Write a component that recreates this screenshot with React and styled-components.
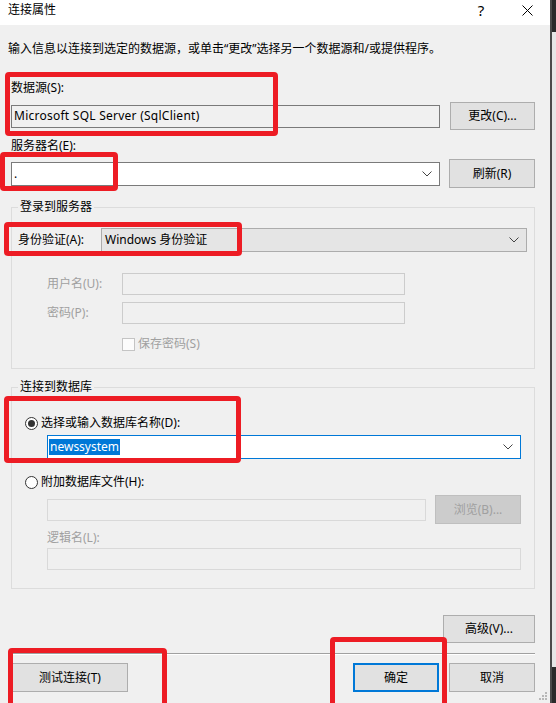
import React from "react";
import styled, { createGlobalStyle } from "styled-components";

const GlobalStyle = createGlobalStyle`
  html, body {
    margin: 0;
    padding: 0;
  }
  body {
    background: #f0f0f0;
    font-family: "Noto Sans", "Noto Sans CJK SC", sans-serif;
    font-size: 12px;
    line-height: 16px;
    color: #000;
  }
`;

const Screen = styled.div`
  position: relative;
  width: 556px;
  height: 703px;
  display: flex;
  overflow: hidden;
`;

const Dialog = styled.div`
  width: 550px;
  display: flex;
  flex-direction: column;
  background: #f0f0f0;
`;

const TitleBar = styled.div`
  height: 25px;
  flex: none;
  background: #fff;
  display: flex;
  align-items: flex-start;
  padding: 2px 13px 0 8px;
  box-sizing: border-box;
`;

const TitleControls = styled.div`
  margin-left: auto;
  display: flex;
  align-items: center;
  gap: 26px;
  height: 16px;
`;

const HelpMark = styled.span`
  width: 20px;
  text-align: center;
  font-size: 15px;
`;

const CloseMark = styled.span`
  width: 20px;
  display: flex;
  justify-content: center;
`;

const Body = styled.div`
  display: flex;
  flex-direction: column;
  padding: 0 15px 0 11px;
`;

const Description = styled.div`
  margin: 16px 0 0 -3px;
`;

const Label = styled.div`
  margin-top: ${p => p.mt || 0}px;
  margin-left: ${p => p.ml || 0}px;
  color: ${p => (p.disabled ? "#a0a0a0" : "#000")};
`;

const Row = styled.div`
  display: flex;
  align-items: center;
  gap: ${p => p.gap || 0}px;
  margin-top: ${p => p.mt || 0}px;
  margin-left: ${p => p.ml || 0}px;
  justify-content: ${p => p.justify || "flex-start"};
`;

const Field = styled.div`
  position: relative;
  box-sizing: border-box;
  display: flex;
  align-items: center;
  height: ${p => p.h || 23}px;
  width: ${p => (p.w ? `${p.w}px` : "auto")};
  flex: ${p => (p.w ? "none" : "1")};
  margin-left: ${p => p.ml || 0}px;
  padding-left: ${p => p.pl || 2}px;
  background: ${p => p.bg || "#fff"};
  border: 1px solid ${p => p.bc || "#7a7a7a"};
  letter-spacing: ${p => p.ls || 0}px;
  white-space: nowrap;
`;

const Chevron = styled.svg`
  position: absolute;
  right: 7px;
  top: 50%;
  margin-top: -3px;
`;

const Selected = styled.span`
  background: #0078d7;
  color: #fff;
  padding: 0 1px;
`;

const Button = styled.button`
  box-sizing: border-box;
  flex: none;
  width: ${p => p.w || 86}px;
  height: ${p => p.h || 29}px;
  margin: 0;
  margin-left: ${p => p.ml || 0}px;
  padding: 0;
  font: inherit;
  color: ${p => (p.disabled ? "#a0a0a0" : "#000")};
  background: ${p => (p.disabled ? "#cccccc" : "#e1e1e1")};
  border: ${p => (p.primary ? "2px solid #0078d7" : `1px solid ${p.disabled ? "#bfbfbf" : "#adadad"}`)};
`;

const Group = styled.fieldset`
  margin: ${p => p.mt}px 0 0 0;
  padding: 0 ${p => p.pr}px ${p => p.pb}px 6px;
  border: 1px solid #dcdcdc;
  min-width: 0;
  display: flex;
  flex-direction: column;
`;

const Legend = styled.legend`
  padding: 0 2px;
  line-height: 16px;
`;

const AuthLabel = styled.div`
  width: 83px;
  flex: none;
`;

const CredLabel = styled.div`
  width: 75px;
  margin-left: 29px;
  flex: none;
  color: #a0a0a0;
`;

const CheckBox = styled.div`
  width: 13px;
  height: 13px;
  box-sizing: border-box;
  border: 1px solid #c4c4c4;
  background: #fcfcfc;
  flex: none;
`;

const Radio = styled.div`
  position: relative;
  width: 13px;
  height: 13px;
  box-sizing: border-box;
  border-radius: 50%;
  border: 1px solid #333;
  background: #fff;
  margin-left: 7px;
  flex: none;
  &::after {
    content: "";
    display: ${p => (p.checked ? "block" : "none")};
    position: absolute;
    left: 2px;
    top: 2px;
    width: 7px;
    height: 7px;
    border-radius: 50%;
    background: #333;
  }
`;

const Separator = styled.div`
  margin-top: 10px;
  height: 0;
  border-top: 1px solid #a0a0a0;
  border-bottom: 1px solid #fff;
`;

const Strip = styled.div`
  width: 6px;
  display: flex;
  flex-direction: column;
  border-left: 2px solid #4a4a4a;
  box-sizing: border-box;
  flex: none;
`;

const StripPart = styled.div`
  height: ${p => (p.h ? `${p.h}px` : "auto")};
  flex: ${p => (p.h ? "none" : "1")};
  background: ${p => p.bg};
`;

const Mark = styled.div`
  position: absolute;
  left: ${p => p.x}px;
  top: ${p => p.y}px;
  width: ${p => p.w}px;
  height: ${p => p.h}px;
  box-sizing: border-box;
  border: 5px solid #ed1c24;
  border-radius: 4px;
  pointer-events: none;
`;

const Grip = styled.svg`
  position: absolute;
  left: 539px;
  top: 692px;
`;

const Down = () => (
  <Chevron width="10" height="6" viewBox="0 0 10 6">
    <polyline points="0.5,0.5 5,5 9.5,0.5" fill="none" stroke="#444" strokeWidth="1" />
  </Chevron>
);

const App = () => (
  <Screen>
    <GlobalStyle />
    <Dialog>
      <TitleBar>
        连接属性
        <TitleControls>
          <HelpMark>?</HelpMark>
          <CloseMark>
            <svg width="11" height="11" viewBox="0 0 11 11">
              <path d="M0.5 0.5 L10.5 10.5 M10.5 0.5 L0.5 10.5" stroke="#000" strokeWidth="1" />
            </svg>
          </CloseMark>
        </TitleControls>
      </TitleBar>
      <Body>
        <Description>
          输入信息以连接到选定的数据源，或单击“更改”选择另一个数据源和/或提供程序。
        </Description>

        <Label mt={23}>数据源(S):</Label>
        <Row mt={6} gap={10}>
          <Field h={23} pl={2} bg="#f0f0f0" ls={0.25}>Microsoft SQL Server (SqlClient)</Field>
          <Button w={85} h={28}>更改(C)...</Button>
        </Row>

        <Label mt={8}>服务器名(E):</Label>
        <Row mt={5} gap={9}>
          <Field h={24} pl={2}>
            .
            <Down />
          </Field>
          <Button>刷新(R)</Button>
        </Row>

        <Group mt={11} pr={7} pb={16}>
          <Legend>登录到服务器</Legend>
          <Row mt={13}>
            <AuthLabel>身份验证(A):</AuthLabel>
            <Field h={24} pl={3} bg="#e5e5e5" bc="#acacac">
              Windows 身份验证
              <Down />
            </Field>
          </Row>
          <Row mt={21}>
            <CredLabel>用户名(U):</CredLabel>
            <Field w={283} h={22} bg="#f0f0f0" bc="#cccccc" />
          </Row>
          <Row mt={7}>
            <CredLabel>密码(P):</CredLabel>
            <Field w={283} h={22} bg="#f0f0f0" bc="#cccccc" />
          </Row>
          <Row mt={12} ml={104} gap={3}>
            <CheckBox />
            <Label disabled>保存密码(S)</Label>
          </Row>
        </Group>

        <Group mt={10} pr={13} pb={18}>
          <Legend>连接到数据库</Legend>
          <Row mt={20} gap={3}>
            <Radio checked />
            <span>选择或输入数据库名称(D):</span>
          </Row>
          <Row mt={4}>
            <Field ml={29} h={24} pl={1} bc="#0078d7">
              <Selected>newssystem</Selected>
              <Down />
            </Field>
          </Row>
          <Row mt={15} gap={3}>
            <Radio />
            <span>附加数据库文件(H):</span>
          </Row>
          <Row mt={5} gap={9}>
            <Field ml={29} h={22} bg="#f0f0f0" bc="#d9d9d9" />
            <Button disabled>浏览(B)...</Button>
          </Row>
          <Label mt={6} ml={29} disabled>逻辑名(L):</Label>
          <Row mt={2}>
            <Field ml={29} h={22} bg="#f0f0f0" bc="#d9d9d9" />
          </Row>
        </Group>

        <Row mt={26} justify="flex-end">
          <Button w={92} h={28}>高级(V)...</Button>
        </Row>
        <Separator />
        <Row mt={8}>
          <Button w={116} ml={1}>测试连接(T)</Button>
          <Button primary ml={225}>确定</Button>
          <Button ml={10}>取消</Button>
        </Row>
      </Body>
    </Dialog>
    <Strip>
      <StripPart h={32} bg="#2b2b2b" />
      <StripPart bg="#e6e6e6" />
      <StripPart h={36} bg="#2b2b2b" />
    </Strip>

    <Grip width="9" height="9" viewBox="0 0 9 9">
      <rect x="6" y="0" width="2" height="2" fill="#b8b8b8" />
      <rect x="3" y="3" width="2" height="2" fill="#b8b8b8" />
      <rect x="6" y="3" width="2" height="2" fill="#b8b8b8" />
      <rect x="0" y="6" width="2" height="2" fill="#b8b8b8" />
      <rect x="3" y="6" width="2" height="2" fill="#b8b8b8" />
      <rect x="6" y="6" width="2" height="2" fill="#b8b8b8" />
    </Grip>

    <Mark x={5} y={72} w={273} h={64} />
    <Mark x={0} y={152} w={118} h={39} />
    <Mark x={4} y={222} w={238} h={34} />
    <Mark x={4} y={396} w={237} h={67} />
    <Mark x={8} y={648} w={159} h={62} />
    <Mark x={330} y={637} w={117} h={73} />
  </Screen>
);

export default App;
